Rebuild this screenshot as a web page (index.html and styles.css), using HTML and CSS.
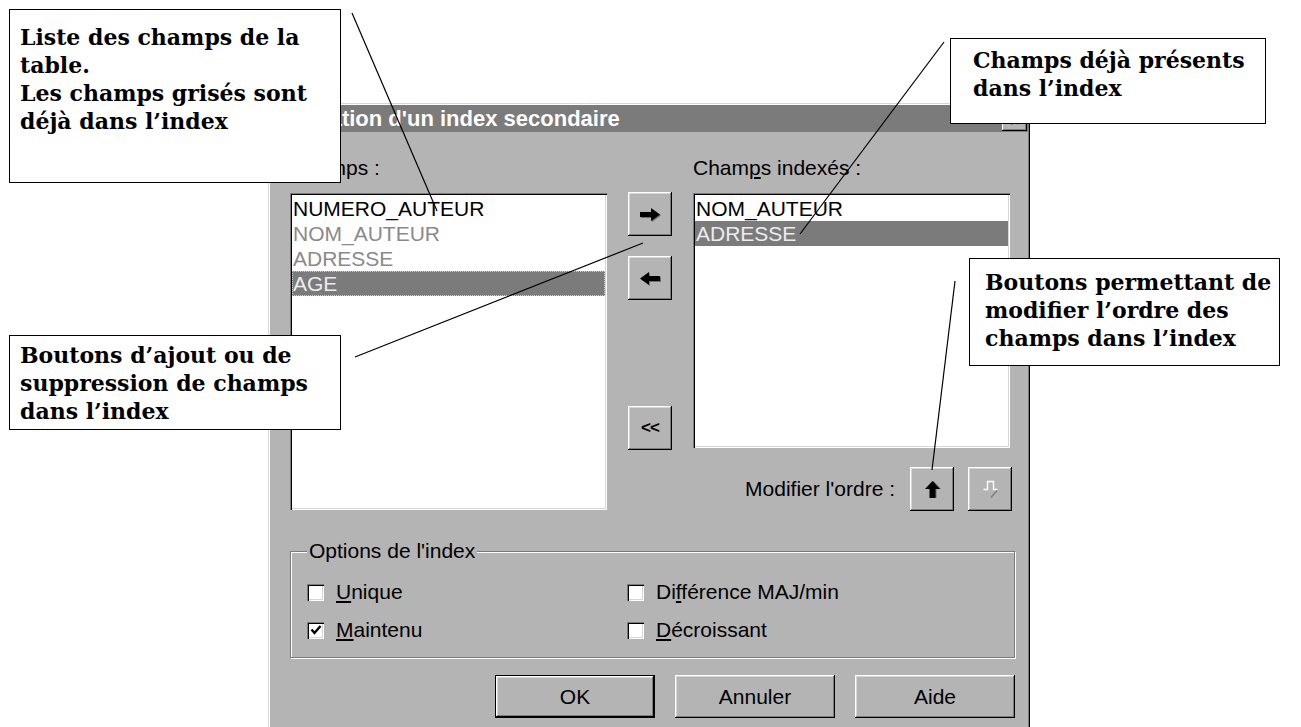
FILE: index.html
```html
<!DOCTYPE html>
<html lang="fr">
<head>
    <meta charset="UTF-8">
    <title>Création d'un index secondaire</title>
    <link rel="stylesheet" href="styles.css">
</head>
<body>
    <div id="dialog">
        <div class="titlebar">
            <span class="title">Création d'un index secondaire</span>
            <span class="close">×</span>
        </div>
        <div class="content">
            <div class="fields">
                <div class="col">
                    <div class="label"><u>C</u>hamps :</div>
                    <ul class="list list-left">
                        <li>NUMERO_AUTEUR</li>
                        <li class="grey">NOM_AUTEUR</li>
                        <li class="grey">ADRESSE</li>
                        <li class="sel focus">AGE</li>
                    </ul>
                </div>
                <div class="mid">
                    <button class="btn sq">
                        <svg width="22" height="15" viewBox="0 0 22 15">
                            <polygon points="1,5 12,5 12,1 21,7.5 12,14 12,10 1,10" fill="#6e6e6e" transform="translate(1,1)"/>
                            <polygon points="1,5 12,5 12,1 21,7.5 12,14 12,10 1,10" fill="#000"/>
                        </svg>
                    </button>
                    <button class="btn sq">
                        <svg width="22" height="15" viewBox="0 0 22 15">
                            <polygon points="21,5 10,5 10,1 1,7.5 10,14 10,10 21,10" fill="#6e6e6e" transform="translate(1,1)"/>
                            <polygon points="21,5 10,5 10,1 1,7.5 10,14 10,10 21,10" fill="#000"/>
                        </svg>
                    </button>
                    <button class="btn sq btn-all">&lt;&lt;</button>
                </div>
                <div class="col">
                    <div class="label">Cham<u>p</u>s indexés :</div>
                    <ul class="list list-right">
                        <li>NOM_AUTEUR</li>
                        <li class="sel">ADRESSE</li>
                    </ul>
                    <div class="order">
                        <span>Modifier l'ordre :</span>
                        <button class="btn sq">
                            <svg width="17" height="19" viewBox="0 0 17 19">
                                <polygon points="8.5,1 16,9 11.5,9 11.5,18 5.5,18 5.5,9 1,9" fill="#6e6e6e" transform="translate(1,0)"/>
                                <polygon points="8.5,1 16,9 11.5,9 11.5,18 5.5,18 5.5,9 1,9" fill="#000"/>
                            </svg>
                        </button>
                        <button class="btn sq" disabled>
                            <svg width="17" height="19" viewBox="0 0 17 19">
                                <polyline points="1.5,9.5 5.5,9.5 5.5,1.5 11.5,1.5 11.5,9.5 15.5,9.5" fill="none" stroke="#fff" stroke-width="1.4"/>
                                <line x1="15" y1="10.5" x2="9" y2="17.5" stroke="#7b7b7b" stroke-width="1.4"/>
                            </svg>
                        </button>
                    </div>
                </div>
            </div>

            <fieldset class="options">
                <legend>Options de l'index</legend>
                <label class="check"><span class="box"></span><span><u>U</u>nique</span></label>
                <label class="check"><span class="box"></span><span>Di<u>f</u>férence MAJ/min</span></label>
                <label class="check"><span class="box">
                    <svg width="12" height="12" viewBox="0 0 12 12"><polyline points="1.5,5.5 4.5,9 10.5,2" fill="none" stroke="#000" stroke-width="2.4"/></svg>
                </span><span><u>M</u>aintenu</span></label>
                <label class="check"><span class="box"></span><span><u>D</u>écroissant</span></label>
            </fieldset>

            <div class="actions">
                <button class="btn wide btn-default">OK</button>
                <button class="btn wide">Annuler</button>
                <button class="btn wide">Aide</button>
            </div>
        </div>
    </div>

    <div class="note note-fields">Liste des champs de la<br>table.<br>Les champs grisés sont<br>déjà dans l’index</div>
    <div class="note note-add">Boutons d’ajout ou de<br>suppression de champs<br>dans l’index</div>
    <div class="note note-order">Boutons permettant de<br>modifier l’ordre des<br>champs dans l’index</div>
    <div class="note note-present">Champs déjà présents<br>dans l’index</div>

    <svg class="leaders" width="1301" height="727">
        <line x1="352" y1="13" x2="437" y2="211"/>
        <line x1="944" y1="42" x2="800" y2="234"/>
        <line x1="355" y1="357" x2="643" y2="243"/>
        <line x1="955" y1="281" x2="932" y2="470"/>
    </svg>
</body>
</html>
```

FILE: styles.css
```css
* {
    margin: 0;
    padding: 0;
    box-sizing: border-box;
}
body {
    width: 1301px;
    height: 727px;
    overflow: hidden;
    position: relative;
    background: #ffffff;
    font-family: "Liberation Sans", Arial, sans-serif;
}

/* fenetre */
#dialog {
    position: absolute;
    left: 268px;
    top: 103px;
    width: 762px;
    height: 640px;
    padding: 2px;
    background: #b4b4b4;
    box-shadow: inset 1px 1px #d6d6d6, inset 2px 2px #ffffff, inset -1px -1px #000000, inset -2px -2px #7b7b7b;
}
.titlebar {
    height: 27px;
    background: #7b7b7b;
    color: #ffffff;
    display: flex;
    align-items: center;
    justify-content: space-between;
    padding: 0 1px 0 23px;
    font-size: 22px;
    font-weight: bold;
}
.close {
    width: 25px;
    height: 20px;
    margin-top: 4px;
    background: #b4b4b4;
    color: #000;
    font-size: 16px;
    line-height: 20px;
    text-align: center;
    box-shadow: inset -1px -1px #000000, inset 1px 1px #ffffff, inset -2px -2px #7b7b7b;
}
.content {
    padding: 24px 13px 0 20px;
    font-size: 21px;
    color: #000;
}
.fields {
    display: grid;
    grid-template-columns: 317px 44px 319px;
    column-gap: 21px;
}
.label {
    height: 24px;
    line-height: 24px;
    margin-bottom: 13px;
    white-space: nowrap;
}
u {
    text-decoration: underline;
    text-underline-offset: 2px;
}

/* listes */
.list {
    list-style: none;
    background: #ffffff;
    padding: 3px 2px 2px 2px;
    box-shadow: inset 1px 1px #7b7b7b, inset 2px 2px #000000, inset -1px -1px #ffffff, inset -2px -2px #d6d6d6;
}
.list-left {
    height: 317px;
}
.list-right {
    width: 317px;
    height: 255px;
}
.list li {
    height: 25px;
    line-height: 25px;
    padding-left: 1px;
    white-space: nowrap;
}
.list .grey {
    color: #8a8a8a;
}
.list .sel {
    background: #7b7b7b;
    color: #ececec;
}
.list .focus {
    outline: 1px dotted #cfcfcf;
    outline-offset: -1px;
}

/* boutons */
.btn {
    font-family: "Liberation Sans", Arial, sans-serif;
    font-size: 21px;
    color: #000;
    background: #b4b4b4;
    border: none;
    display: flex;
    align-items: center;
    justify-content: center;
    box-shadow: inset -1px -1px #000000, inset 1px 1px #ffffff, inset -2px -2px #7b7b7b, inset 2px 2px #d6d6d6;
}
.sq {
    width: 44px;
    height: 44px;
}
.mid {
    display: flex;
    flex-direction: column;
    gap: 20px;
    padding-top: 36px;
}
.btn-all {
    margin-top: 86px;
    font-size: 17px;
    font-weight: bold;
    letter-spacing: -1px;
}
.order {
    display: flex;
    justify-content: flex-end;
    align-items: center;
    gap: 14px;
    margin-top: 19px;
}
.order span {
    margin-right: 1px;
}

/* options */
.options {
    margin-top: 28px;
    border: 1px solid #7b7b7b;
    box-shadow: 1px 1px #ffffff, inset 1px 1px #ffffff;
    padding: 17px 16px 15px 16px;
    display: grid;
    grid-template-columns: 320px 1fr;
    row-gap: 14px;
}
.options legend {
    padding: 0 2px;
    line-height: 24px;
    background: #b4b4b4;
}
.check {
    display: flex;
    align-items: center;
    gap: 12px;
    height: 24px;
}
.box {
    width: 17px;
    height: 17px;
    background: #ffffff;
    display: flex;
    align-items: center;
    justify-content: center;
    box-shadow: inset 1px 1px #7b7b7b, inset 2px 2px #000000, inset -1px -1px #ffffff, inset -2px -2px #d6d6d6;
}
.actions {
    display: flex;
    justify-content: flex-end;
    gap: 20px;
    margin-top: 17px;
}
.wide {
    width: 160px;
    height: 43px;
}
.btn-default {
    box-shadow: inset 0 0 0 1px #000000, inset -2px -2px #000000, inset 2px 2px #ffffff, inset -3px -3px #7b7b7b, inset 3px 3px #d6d6d6;
}

/* bulles d'explication */
.note {
    position: absolute;
    background: #ffffff;
    border: 1px solid #000000;
    font-family: "DejaVu Serif", "Liberation Serif", serif;
    font-weight: bold;
    font-size: 22px;
    line-height: 28px;
    color: #000;
    white-space: nowrap;
}
.note-fields {
    left: 9px;
    top: 9px;
    width: 332px;
    height: 174px;
    padding: 13px 10px;
}
.note-add {
    left: 9px;
    top: 335px;
    width: 332px;
    height: 95px;
    padding: 5px 10px;
}
.note-order {
    left: 969px;
    top: 258px;
    width: 311px;
    height: 108px;
    padding: 9px 15px;
}
.note-present {
    left: 950px;
    top: 38px;
    height: 86px;
    padding: 7px 20px 0 22px;
}
.leaders {
    position: absolute;
    left: 0;
    top: 0;
}
.leaders line {
    stroke: #000;
    stroke-width: 1.2;
}
```
